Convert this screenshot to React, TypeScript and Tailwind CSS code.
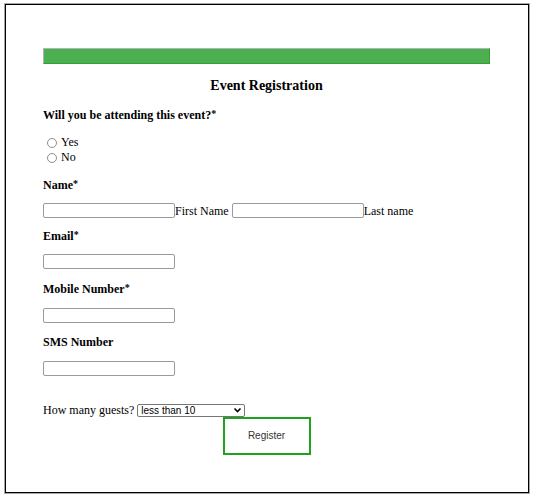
import React from "react";

function Radio({ label }: { label: string }) {
  return (
    <div className="flex h-[15px] items-center leading-[15px]">
      <span className="ml-[4px] h-[10px] w-[10px] rounded-full border border-[#8d8d8d] bg-white" />
      <span className="ml-[4px]">{label}</span>
    </div>
  );
}

function TextBox({ className = "" }: { className?: string }) {
  return (
    <input
      type="text"
      className={
        "block h-[15px] w-[132px] rounded-[2px] border border-[#9a9a9a] bg-white p-0 " +
        className
      }
    />
  );
}

function Req() {
  return <span className="relative top-[-1px] align-top text-[10px] leading-[14px]">*</span>;
}

export default function App() {
  return (
    <div className="h-[500px] w-[534px] bg-white pl-[5px] pt-[4px]">
      <div className="h-[489px] w-[524px] border border-black pl-[37px] pr-[38px] pt-[43px] font-['Liberation_Serif',serif] text-[12px] leading-[14px] text-black shadow-[0_0_0_1px_#a8a8a8]">
        <div className="h-[16px] border border-b-[#33a033] border-l-[#b3b3b3] border-r-[#33a033] border-t-[#b3b3b3] bg-[#4caf50]" />
        <h3 className="mt-[14px] text-center text-[14px] font-bold leading-[16px]">
          Event Registration
        </h3>
        <div className="mt-[14px] font-bold">
          Will you be attending this event?<Req />
        </div>
        <div className="mt-[13px]">
          <Radio label="Yes" />
          <Radio label="No" />
        </div>
        <div className="mt-[13px] font-bold">
          Name<Req />
        </div>
        <div className="mt-[11px] flex h-[15px] items-center">
          <TextBox />
          <span>First Name</span>
          <TextBox className="ml-[3px]" />
          <span>Last name</span>
        </div>
        <div className="mt-[11px] font-bold">
          Email<Req />
        </div>
        <TextBox className="mt-[11px]" />
        <div className="mt-[13px] font-bold">
          Mobile Number<Req />
        </div>
        <TextBox className="mt-[12px]" />
        <div className="mt-[12px] font-bold">SMS Number</div>
        <TextBox className="mt-[12px]" />
        <div className="mt-[27px] flex h-[14px] items-center">
          <span>How many guests?</span>
          <div className="relative ml-[3px] h-[13px] w-[108px]">
            <select className="block h-[13px] w-[108px] appearance-none rounded-[2px] border border-[#767676] bg-white py-0 pl-[3px] font-['Liberation_Sans',Arial,sans-serif] text-[10px] leading-[11px] text-black">
              <option>less than 10</option>
              <option>10 to 50</option>
              <option>more than 50</option>
            </select>
            <svg
              className="pointer-events-none absolute left-[96px] top-[2px]"
              width="9"
              height="9"
              viewBox="0 0 9 9"
            >
              <path d="M1.5 2.5 L4.5 5.5 L7.5 2.5" fill="none" stroke="#000" strokeWidth="1.6" />
            </svg>
          </div>
        </div>
        <button className="mx-auto block h-[38px] w-[88px] border-2 border-[#1fa31f] bg-white font-['Liberation_Sans',Arial,sans-serif] text-[10px] text-[#333]">
          Register
        </button>
      </div>
    </div>
  );
}
